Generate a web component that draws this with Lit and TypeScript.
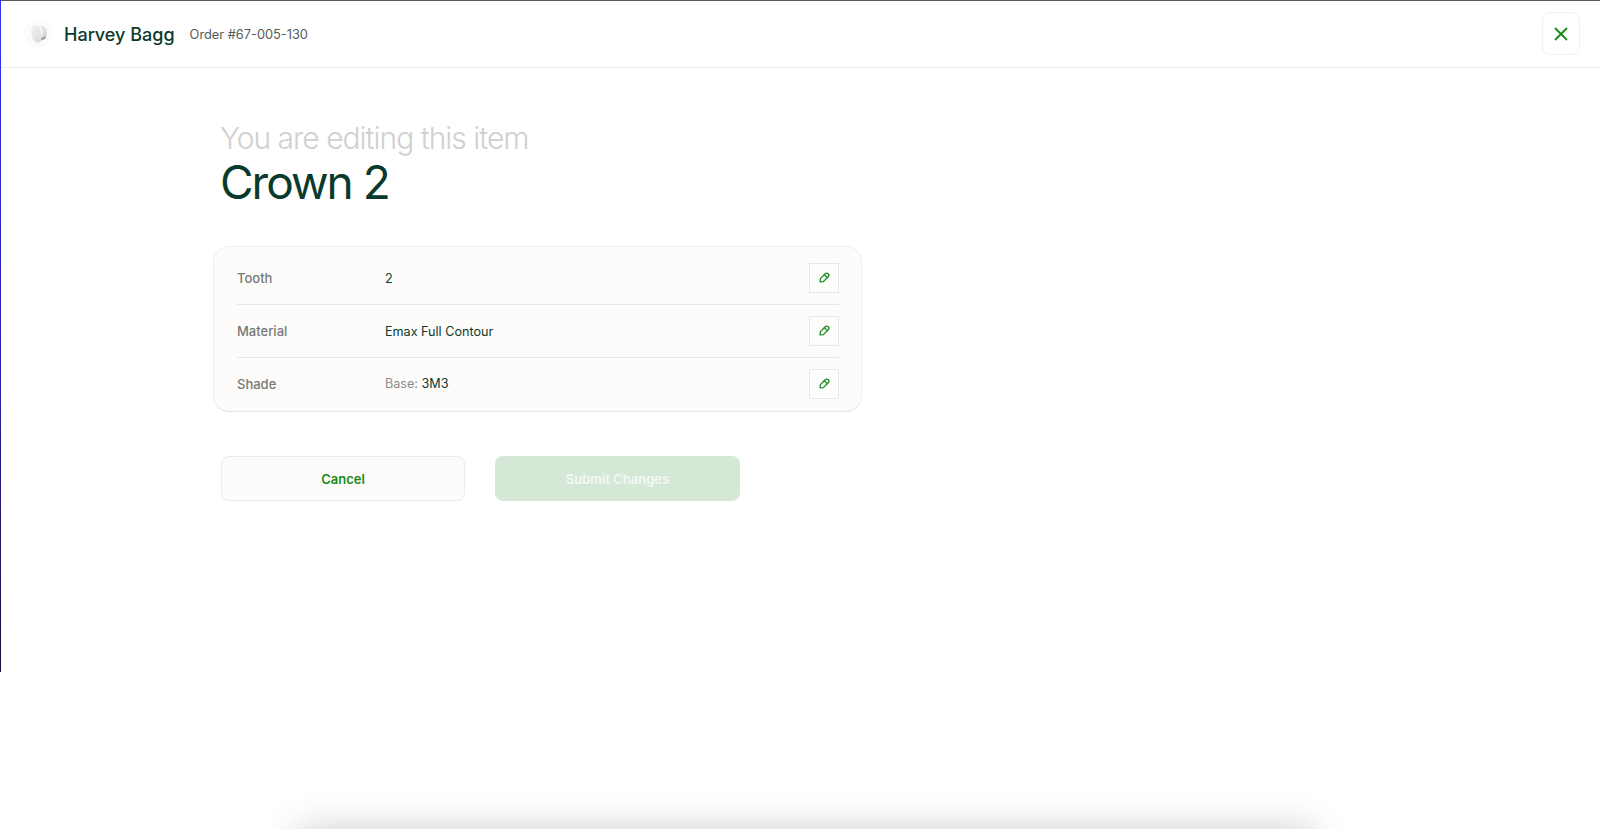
import { LitElement, html, css, svg } from "lit";
import { customElement } from "lit/decorators.js";

const pencil = svg`<svg class="pencil" viewBox="0 0 12 12" width="12" height="12" fill="none" stroke="#1b8a1f" stroke-width="1.3" stroke-linejoin="round" stroke-linecap="round"><g transform="rotate(45 6 6)"><path d="M3.9 2.2a2.1 2.1 0 0 1 4.2 0V9L6 11.6 3.9 9Z"/><path d="M3.9 3.4h4.2"/></g></svg>`;

@customElement("app-root")
export class AppRoot extends LitElement {
  static styles = css`
    :host {
      display: block;
      position: relative;
      height: 829px;
      overflow: hidden;
      background: #fff;
      font-family: Inter, "Liberation Sans", sans-serif;
      color: #0a3a2c;
    }
    .edge-top { position: absolute; top: 0; left: 0; right: 0; height: 1px; background: #5a5a60; }
    .edge-left { position: absolute; top: 0; left: 0; width: 1px; height: 672px; background: linear-gradient(#3a2ff0 0%, #2a22b8 50%, #10123c 100%); }
    .shadow { position: absolute; left: 300px; width: 1012px; top: 829px; height: 40px; box-shadow: 0 0 36px 2px rgba(0,0,0,.18); }
    header {
      box-sizing: border-box;
      height: 68px;
      display: flex;
      align-items: center;
      padding: 0 20px 0 24px;
      border-bottom: 1px solid #ededed;
    }
    .logo { width: 28px; height: 28px; border-radius: 50%; background: #fcfbfa; display: flex; align-items: center; justify-content: center; margin-right: 12px; }
    .name { font-size: 18px; font-weight: 500; color: #0a3a2c; margin-right: 15px; padding-top: 2px; }
    .order { font-size: 12.8px; color: #555b59; padding-top: 2px; }
    .close {
      margin-left: auto; box-sizing: border-box; width: 38px; height: 43px;
      border: 1px solid #f1f1f1; border-radius: 8px; background: #fff;
      display: flex; align-items: center; justify-content: center; padding: 0;
    }
    main { padding: 53px 0 0 220px; }
    .sub { font-size: 30px; font-weight: 300; line-height: 34px; color: #cfd0d0; letter-spacing: -1px; }
    h1 { margin: 0; font-size: 46px; font-weight: 400; line-height: 54px; color: #0a3a2c; letter-spacing: -2px; }
    .card {
      box-sizing: border-box; width: 649px; margin: 37px 0 0 -7px;
      padding: 5px 22px 0 23px; background: #fdfcfa; border: 1px solid #f0efed; border-bottom-color: #e4e3e1;
      border-radius: 16px;
    }
    .row { display: flex; align-items: center; height: 53px; border-bottom: 1px solid #e8e8e6; box-sizing: border-box; }
    .row:last-child { border-bottom: 0; padding-bottom: 2px; }
    .label { width: 148px; font-size: 13px; font-weight: 500; color: #777a79; }
    .value { font-size: 12.6px; color: #0a3a2c; }
    .muted { color: #8a8c8b; }
    .edit {
      margin-left: auto; box-sizing: border-box; width: 30px; height: 30px; padding: 0;
      border: 1px solid #e9e8e6; background: #fdfdfc;
      display: flex; align-items: center; justify-content: center;
    }
    .actions { display: flex; gap: 30px; margin: 44px 0 0 1px; }
    .btn {
      box-sizing: border-box; width: 244px; height: 45px; border-radius: 8px;
      font: 600 13px Inter, "Liberation Sans", sans-serif;
    }
    .cancel { background: #fdfcfa; border: 1px solid #ebebe9; color: #178a17; }
    .submit { width: 245px; background: #d5e8d6; border: 0; color: #f4f8f4; }
    .tooth { margin-left: 2px; }
  `;

  render() {
    const rows = [
      ["Tooth", html`2`],
      ["Material", html`Emax Full Contour`],
      ["Shade", html`<span class="muted">Base:</span> 3M3`],
    ];
    return html`
      <header>
        <div class="logo">
          <svg class="tooth" viewBox="0 0 20 20" width="20" height="20">
            <defs><linearGradient id="t" x1="0" y1="0" x2="1" y2="1"><stop offset="0" stop-color="#f4f4f4"/><stop offset=".65" stop-color="#dedede"/><stop offset="1" stop-color="#c4c4c4"/></linearGradient></defs>
            <path fill="url(#t)" d="M2 6C2 3 4 1.500 7 1.500c1.500 0 2.500 .5 3.500 1 1-.7 2-1 3.500-.6 2.500 .6 4 3 4 6 0 2.500-.5 4.500-1.500 5.500-1.500 .6-3 1.300-4 3.200-.5 1.100-1.700 1.900-3.500 1.900-2.500 0-4.200-1-5.200-3.500C3 12 2 9.500 2 6Z"/>
            <path d="M11 3c1.500 2 2 5 1.300 8" stroke="#fff" stroke-width="1.200" fill="none"/>
            <path d="M12 15.500c1-1.700 2.500-2.600 5-3-.5 2-1.800 3.600-5 3Z" fill="#8d8d8d"/>
          </svg>
        </div>
        <span class="name">Harvey Bagg</span>
        <span class="order">Order #67-005-130</span>
        <button class="close" aria-label="Close">
          <svg viewBox="0 0 14 14" width="14" height="14" fill="none" stroke="#178a17" stroke-width="1.900"><path d="M1 1l12 12M13 1L1 13"/></svg>
        </button>
      </header>
      <main>
        <div class="sub">You are editing this item</div>
        <h1>Crown 2</h1>
        <section class="card">
          ${rows.map(([l, v]) => html`
            <div class="row">
              <div class="label">${l}</div>
              <div class="value">${v}</div>
              <button class="edit" aria-label="Edit ${l}">${pencil}</button>
            </div>`)}
        </section>
        <div class="actions">
          <button class="btn cancel">Cancel</button>
          <button class="btn submit">Submit Changes</button>
        </div>
      </main>
      <div class="edge-top"></div>
      <div class="edge-left"></div>
      <div class="shadow"></div>
    `;
  }
}
